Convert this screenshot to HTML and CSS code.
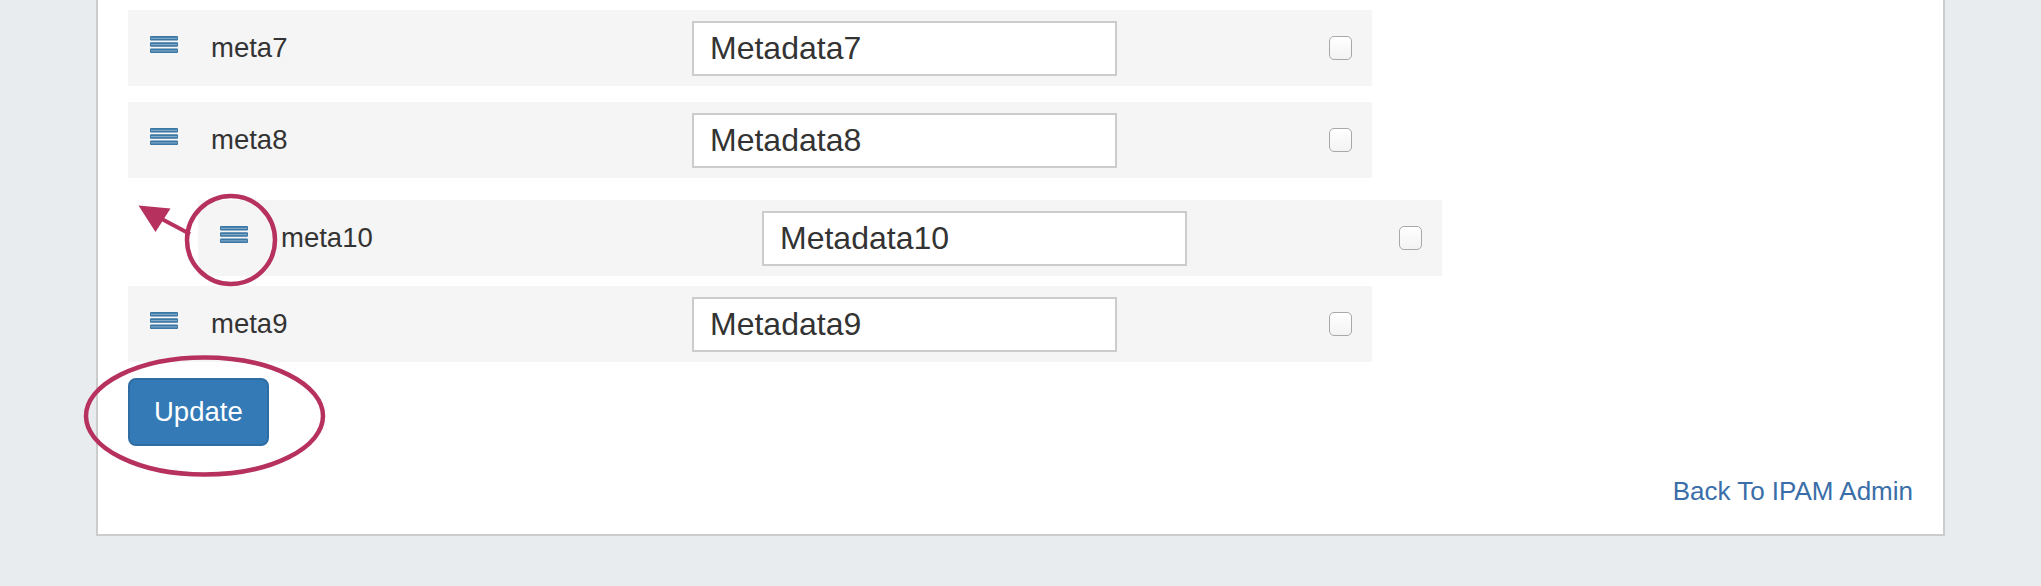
FILE: index.html
```html
<!DOCTYPE html>
<html lang="en">
<head>
<meta charset="utf-8">
<title>Metadata order</title>
<link rel="stylesheet" href="styles.css">
</head>
<body>
<div class="page">
  <div class="panel">
    <div class="list">
      <div class="row">
        <span class="handle"><svg viewBox="0 0 28 17" width="28" height="17"><g class="bars"><rect x="0" y="0" width="28" height="4.4" rx="1"/><rect x="0" y="6.3" width="28" height="4.4" rx="1"/><rect x="0" y="12.6" width="28" height="4.4" rx="1"/></g><g class="shine"><rect x="1" y="1.8" width="26" height="1"/><rect x="1" y="8.1" width="26" height="1"/><rect x="1" y="14.4" width="26" height="1"/></g></svg></span>
        <span class="name">meta7</span>
        <input class="field" type="text" value="Metadata7">
        <input class="check" type="checkbox">
      </div>
      <div class="row">
        <span class="handle"><svg viewBox="0 0 28 17" width="28" height="17"><g class="bars"><rect x="0" y="0" width="28" height="4.4" rx="1"/><rect x="0" y="6.3" width="28" height="4.4" rx="1"/><rect x="0" y="12.6" width="28" height="4.4" rx="1"/></g><g class="shine"><rect x="1" y="1.8" width="26" height="1"/><rect x="1" y="8.1" width="26" height="1"/><rect x="1" y="14.4" width="26" height="1"/></g></svg></span>
        <span class="name">meta8</span>
        <input class="field" type="text" value="Metadata8">
        <input class="check" type="checkbox">
      </div>
      <div class="row placeholder"></div>
      <div class="row">
        <span class="handle"><svg viewBox="0 0 28 17" width="28" height="17"><g class="bars"><rect x="0" y="0" width="28" height="4.4" rx="1"/><rect x="0" y="6.3" width="28" height="4.4" rx="1"/><rect x="0" y="12.6" width="28" height="4.4" rx="1"/></g><g class="shine"><rect x="1" y="1.8" width="26" height="1"/><rect x="1" y="8.1" width="26" height="1"/><rect x="1" y="14.4" width="26" height="1"/></g></svg></span>
        <span class="name">meta9</span>
        <input class="field" type="text" value="Metadata9">
        <input class="check" type="checkbox">
      </div>
      <div class="row dragging">
        <span class="handle"><svg viewBox="0 0 28 17" width="28" height="17"><g class="bars"><rect x="0" y="0" width="28" height="4.4" rx="1"/><rect x="0" y="6.3" width="28" height="4.4" rx="1"/><rect x="0" y="12.6" width="28" height="4.4" rx="1"/></g><g class="shine"><rect x="1" y="1.8" width="26" height="1"/><rect x="1" y="8.1" width="26" height="1"/><rect x="1" y="14.4" width="26" height="1"/></g></svg></span>
        <span class="name">meta10</span>
        <input class="field" type="text" value="Metadata10">
        <input class="check" type="checkbox">
      </div>
    </div>
    <button class="btn-update" type="button">Update</button>
    <div class="footer"><a class="back-link" href="#">Back To IPAM Admin</a></div>
  </div>
</div>
<svg class="annotations" width="2041" height="586" viewBox="0 0 2041 586">
  <circle cx="231" cy="240" r="44" />
  <ellipse cx="204.5" cy="416" rx="118.5" ry="58.5" />
  <line x1="190" y1="234" x2="158" y2="217" />
  <polygon class="head" points="138.5,205.5 170.5,208.5 155.5,232" />
</svg>
</body>
</html>
```

FILE: styles.css
```css
html, body {
  margin: 0;
  padding: 0;
}
body {
  background: #e9ecef;
  font-family: "Liberation Sans", Arial, Helvetica, sans-serif;
  color: #333333;
  width: 2041px;
  height: 586px;
  overflow: hidden;
}
.page {
  padding: 0 96px;
}
.panel {
  background: #ffffff;
  border: 2px solid #cccccc;
  border-top: none;
  padding: 10px 30px 23px 30px;
}
.list {
  position: relative;
  width: 1244px;
}
.row {
  display: flex;
  align-items: center;
  width: 1244px;
  height: 76px;
  margin-bottom: 16px;
  background: #f5f5f5;
  box-sizing: border-box;
  padding-left: 22px;
}
.row.placeholder {
  visibility: hidden;
}
.row.dragging {
  position: absolute;
  left: 70px;
  top: 190px;
  margin: 0;
}
.handle {
  display: flex;
  align-self: flex-start;
  width: 28px;
  height: 17px;
  margin-top: 26px;
  margin-right: 33px;
}
.handle svg {
  display: block;
}
.bars rect {
  fill: #3b77a4;
}
.shine rect {
  fill: #8db2cf;
}
.name {
  width: 481px;
  font-size: 27.5px;
  color: #333333;
  line-height: 32px;
}
.field {
  width: 425px;
  height: 55px;
  box-sizing: border-box;
  border: 2px solid #cccccc;
  background: #ffffff;
  padding: 0 16px;
  margin: 0;
  font-family: "Liberation Sans", Arial, Helvetica, sans-serif;
  font-size: 32px;
  color: #333333;
  outline: none;
  border-radius: 0;
}
.check {
  appearance: none;
  -webkit-appearance: none;
  width: 23px;
  height: 24px;
  margin: 0 0 0 212px;
  box-sizing: border-box;
  border: 1.5px solid #a8a8a8;
  border-radius: 5px;
  background: linear-gradient(#ffffff, #f3f3f3);
  box-shadow: inset 0 1px 0 #ffffff;
}
.btn-update {
  display: block;
  height: 68px;
  padding: 0 24px;
  background: #337ab7;
  border: 2px solid #2e6da4;
  border-radius: 8px;
  color: #ffffff;
  font-family: "Liberation Sans", Arial, Helvetica, sans-serif;
  font-size: 27.5px;
  line-height: 64px;
  cursor: pointer;
}
.footer {
  margin-top: 25px;
  height: 40px;
  line-height: 40px;
  text-align: right;
}
.back-link {
  font-size: 26px;
  color: #3a6ea8;
  text-decoration: none;
}
.annotations {
  position: absolute;
  left: 0;
  top: 0;
  pointer-events: none;
}
.annotations circle,
.annotations ellipse {
  fill: none;
  stroke: #b7315f;
  stroke-width: 4.5;
}
.annotations line {
  stroke: #b7315f;
  stroke-width: 4;
}
.annotations .head {
  fill: #b7315f;
}
```
